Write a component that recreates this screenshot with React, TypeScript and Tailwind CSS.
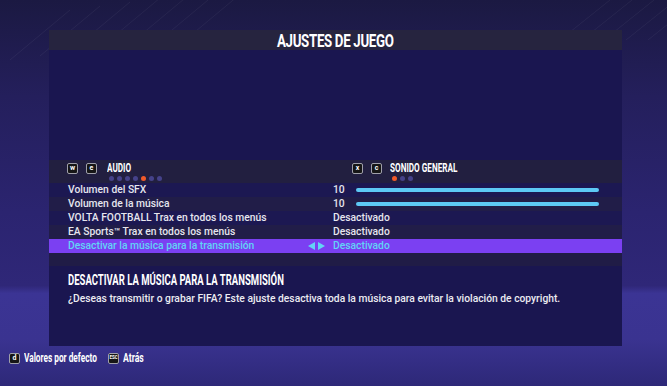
import React from "react";

const ROWS = [
  { label: "Volumen del SFX", value: "10", slider: true },
  { label: "Volumen de la música", value: "10", slider: true },
  { label: "VOLTA FOOTBALL Trax en todos los menús", value: "Desactivado" },
  { label: "EA Sports™ Trax en todos los menús", value: "Desactivado" },
  { label: "Desactivar la música para la transmisión", value: "Desactivado", active: true },
];

const Key = ({ k, small }: { k: string; small?: boolean }) => (
  <span className="flex h-[11px] w-[11px] items-center justify-center rounded-[2px] border border-[#a0a0aa] bg-[#161616] font-bold leading-none text-white">
    <span className={small ? "text-[4.5px]" : "text-[7px]"}>{k}</span>
  </span>
);

const Dots = ({ count, on }: { count: number; on: number }) => (
  <div className="flex gap-[3px]">
    {Array.from({ length: count }).map((_, i) => (
      <span
        key={i}
        className={i === on ? "h-[5px] w-[5px] rounded-full bg-[#f05a2a]" : "h-[5px] w-[5px] rounded-full bg-[#45428a]"}
      />
    ))}
  </div>
);

export default function App() {
  return (
    <div
      className="relative h-[386px] w-[667px] overflow-hidden bg-[linear-gradient(180deg,#1b1942_0%,#241f5c_25%,#2b2470_55%,#2f2778_74%,#3b3494_76%,#3a3390_88%,#2d2878_100%)] text-white"
      style={{ fontFamily: "Roboto, 'Noto Sans', sans-serif" }}
    >
      {/* faint streaks */}
      <svg className="absolute inset-0" width="667" height="386">
        {[0, 1, 2, 3, 4, 5, 6].map((i) => (
          <line key={i} x1={10 + i * 30} y1={60 - i * 4} x2={70 + i * 30} y2={10 - i * 4} stroke="#ffffff" strokeOpacity="0.05" strokeWidth="1" />
        ))}
        {[0, 1, 2, 3, 4].map((i) => (
          <line key={"r" + i} x1={560 + i * 22} y1={40} x2={610 + i * 22} y2={0} stroke="#ffffff" strokeOpacity="0.05" strokeWidth="1" />
        ))}
      </svg>

      <div className="relative flex flex-col pl-[49px] pt-[30px]">
        <div className="flex w-[573px] flex-col">
          {/* title */}
          <div className="flex h-[20px] items-center justify-center bg-[#26243f]">
            <span className="inline-block scale-x-[0.7] whitespace-nowrap text-[19px] font-bold leading-none tracking-tight">
              AJUSTES DE JUEGO
            </span>
          </div>
          <div className="h-[110px] bg-[#1a1650]" />

          {/* list header */}
          <div className="flex h-[23px] bg-[#221f40]">
            <div className="flex w-[303px] gap-[8px] pl-[18px] pt-[3px]">
              <Key k="w" />
              <Key k="e" />
              <div className="flex flex-col gap-[2px] pl-[2px]">
                <span className="inline-block origin-left scale-x-[0.68] whitespace-nowrap text-[12px] font-bold leading-[11px]">AUDIO</span>
                <div className="pl-[2px]">
                  <Dots count={7} on={4} />
                </div>
              </div>
            </div>
            <div className="flex gap-[8px] pt-[3px]">
              <Key k="x" />
              <Key k="c" />
              <div className="flex flex-col gap-[2px] pl-[0px]">
                <span className="inline-block origin-left scale-x-[0.68] whitespace-nowrap text-[12px] font-bold leading-[11px]">
                  SONIDO GENERAL
                </span>
                <div className="pl-[2px]">
                  <Dots count={3} on={0} />
                </div>
              </div>
            </div>
          </div>

          {/* rows */}
          {ROWS.map((r, i) => (
            <div
              key={r.label}
              className={
                r.active
                  ? "flex h-[14px] items-center bg-[#7b40f2] text-[#62d4f6]"
                  : i % 2 === 0
                  ? "flex h-[14px] items-center bg-[#1c1852] text-[#e6e6ee]"
                  : "flex h-[14px] items-center bg-[#211d48] text-[#e6e6ee]"
              }
            >
              <div className="flex w-[284px] items-center pl-[19px] pr-[8px]">
                <span className="flex-1 whitespace-nowrap text-[10.3px] font-medium leading-none">{r.label}</span>
                {r.active && (
                  <span className="flex items-center gap-[3px]">
                    <svg width="7" height="8" viewBox="0 0 7 8">
                      <path d="M7 0 L0 4 L7 8 Z" fill="#62d4f6" />
                    </svg>
                    <svg width="7" height="8" viewBox="0 0 7 8">
                      <path d="M0 0 L7 4 L0 8 Z" fill="#62d4f6" />
                    </svg>
                  </span>
                )}
              </div>
              {r.slider ? (
                <div className="flex items-center">
                  <span className="w-[23px] text-[10.3px] font-medium leading-none">{r.value}</span>
                  <div className="h-[4px] w-[243px] rounded-full bg-[#5dc9f5]" />
                </div>
              ) : (
                <span className="whitespace-nowrap text-[10.3px] font-medium leading-none">{r.value}</span>
              )}
            </div>
          ))}

          <div className="h-[13px] bg-[#201c46]" />

          {/* description */}
          <div className="flex h-[80px] flex-col bg-[#1a1650] pl-[19px] pt-[8px]">
            <span className="inline-block origin-left scale-x-[0.68] whitespace-nowrap text-[14px] font-bold leading-[13px]">
              DESACTIVAR LA MÚSICA PARA LA TRANSMISIÓN
            </span>
            <span className="mt-[6px] inline-block origin-left scale-x-[0.935] whitespace-nowrap text-[11px] font-medium leading-[11px] text-[#ececf2]">
              ¿Deseas transmitir o grabar FIFA? Este ajuste desactiva toda la música para evitar la violación de copyright.
            </span>
          </div>
        </div>
      </div>

      {/* footer */}
      <div className="relative mt-[6px] flex items-center pl-[9px]">
        <Key k="d" />
        <span className="ml-[4px] inline-block w-[83px] origin-left scale-x-[0.69] whitespace-nowrap text-[12px] font-bold leading-none">
          Valores por defecto
        </span>
        <span className="ml-[1px]">
          <Key k="ESC" small />
        </span>
        <span className="ml-[4px] inline-block origin-left scale-x-[0.72] whitespace-nowrap text-[12px] font-bold leading-none">Atrás</span>
      </div>
    </div>
  );
}
